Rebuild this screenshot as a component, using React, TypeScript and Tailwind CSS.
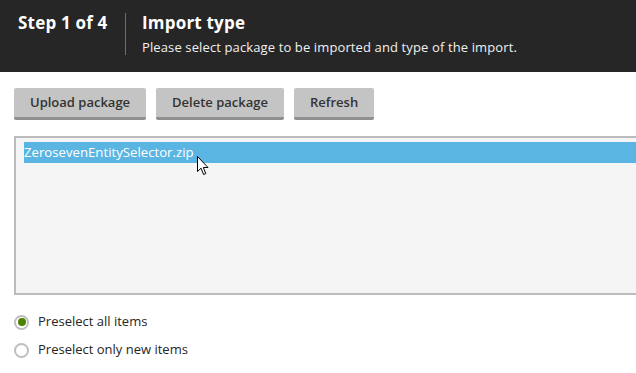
import { useState } from 'react'

const font = { fontFamily: '"Open Sans", "Noto Sans", sans-serif' }

function Cursor() {
  return (
    <svg width="13" height="20" viewBox="0 0 13 20" className="absolute left-[197px] top-[156px]">
      <path d="M0.5 0.5 L0.5 15.5 L4 12.2 L6.6 18.5 L8.8 17.6 L6.3 11.5 L11 11.5 Z" fill="#fff" stroke="#000" strokeWidth="1" strokeLinejoin="miter" />
    </svg>
  )
}

function Radio({ checked, label, onClick }: { checked: boolean; label: string; onClick: () => void }) {
  return (
    <label className="flex h-[28px] cursor-pointer items-center gap-[9px] text-[13px] text-[#262626]" onClick={onClick}>
      <span className="flex h-[15px] w-[15px] items-center justify-center rounded-full border-2 border-[#bfbfbf] bg-white">
        {checked && <span className="h-[8px] w-[8px] rounded-full bg-[#4b8200]" />}
      </span>
      {label}
    </label>
  )
}

export default function App() {
  const [mode, setMode] = useState('all')
  const buttons = ['Upload package', 'Delete package', 'Refresh']

  return (
    <div className="relative h-[373px] w-[636px] overflow-hidden bg-white" style={font}>
      <header className="flex h-[72px] items-start bg-[#262626] pt-[12px] text-white">
        <div className="w-[125px] pl-[18px] text-[17px] font-bold leading-[22px] tracking-[0.2px]">Step 1 of 4</div>
        <div className="mt-px h-[42px] w-px bg-[#6e6e6e]" />
        <div className="pl-[16px]">
          <h1 className="text-[17px] font-bold leading-[22px] tracking-[0.2px]">Import type</h1>
          <p className="mt-[5px] text-[13px] leading-[17px] tracking-[0.12px] text-[#f0f0f0]">
            Please select package to be imported and type of the import.
          </p>
        </div>
      </header>

      <div className="flex gap-[10px] pl-[14px] pt-[16px]">
        {buttons.map((b) => (
          <button
            key={b}
            className="h-[32px] rounded-[2px] border-b-[3px] border-[#8f8f8f] bg-[#c4c4c4] px-[16px] text-[13px] font-semibold text-[#333]"
          >
            {b}
          </button>
        ))}
      </div>

      <div className="ml-[14px] mt-[16px] h-[159px] border-2 border-r-0 border-[#bcbcbc] bg-[#f5f5f5] pl-[8px] pt-[4px]">
        <div className="h-[21px] bg-[#5ab5e3] text-[13.2px] leading-[21px] text-white">ZerosevenEntitySelector.zip</div>
      </div>

      <div className="pl-[14px] pt-[13px]">
        <Radio checked={mode === 'all'} label="Preselect all items" onClick={() => setMode('all')} />
        <Radio checked={mode === 'new'} label="Preselect only new items" onClick={() => setMode('new')} />
      </div>

      <Cursor />
    </div>
  )
}
